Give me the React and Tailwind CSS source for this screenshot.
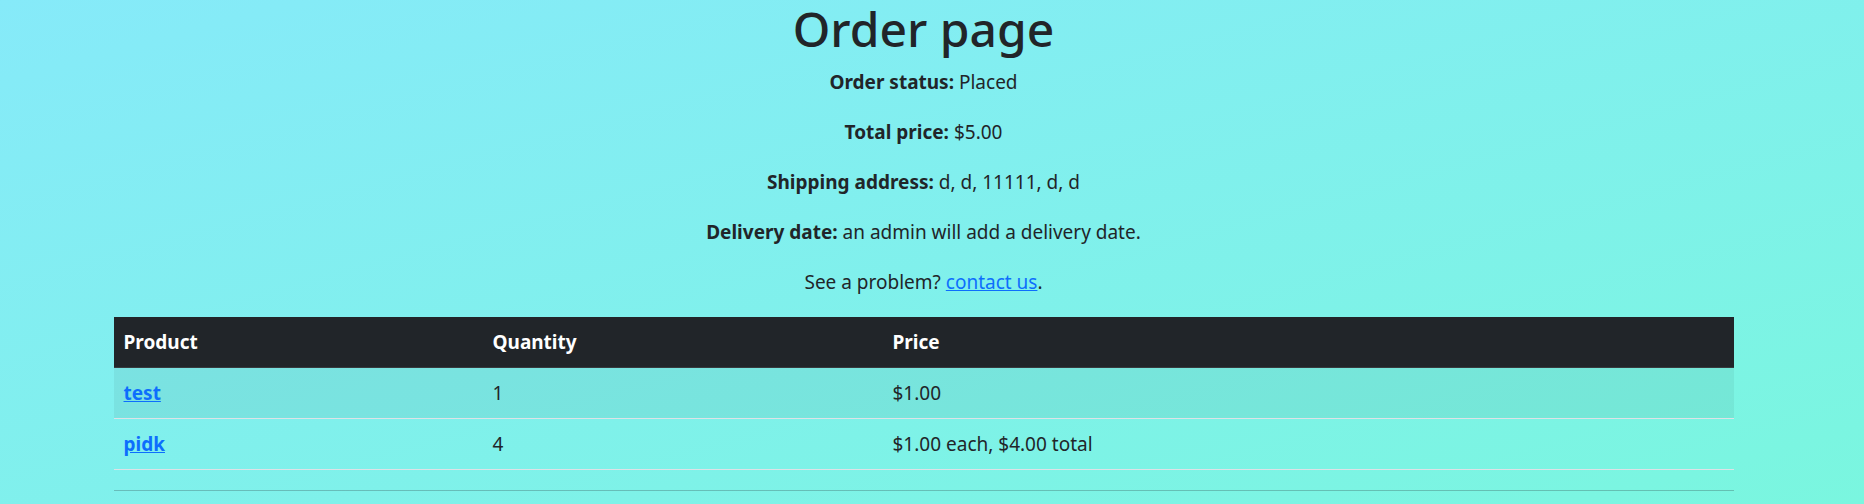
import React from 'react';

const items = [
  { name: 'test', qty: 1, price: '$1.00' },
  { name: 'pidk', qty: 4, price: '$1.00 each, $4.00 total' },
];

const details = [
  ['Order status:', 'Placed'],
  ['Total price:', '$5.00'],
  ['Shipping address:', 'd, d, 11111, d, d'],
  ['Delivery date:', 'an admin will add a delivery date.'],
];

const App = () => {
  return (
    <div className="min-h-screen w-full bg-linear-to-br from-[#86eaf9] to-[#7af6df] text-[#212529] font-['Noto_Sans',sans-serif] text-[19px] leading-[30px]">
      <div className="flex justify-center pr-[17px]">
        <div className="w-[1620px]">
          <h1 className="mb-[10px] text-center text-[48px] leading-[57px] font-medium">Order page</h1>

          {details.map(([label, value]) => (
            <p key={label} className="mb-[20px] text-center">
              <span className="font-bold">{label}</span> {value}
            </p>
          ))}

          <p className="mb-[20px] text-center">
            See a problem?{' '}
            <a href="#" className="text-[#0d6efd] underline">contact us</a>.
          </p>

          <table className="w-full border-collapse text-left">
            <thead>
              <tr className="bg-[#212529] text-white">
                <th className="w-[369px] px-[10px] py-[10px] font-bold border-b border-[#373b3e]">Product</th>
                <th className="w-[400px] px-[10px] py-[10px] font-bold border-b border-[#373b3e]">Quantity</th>
                <th className="px-[10px] py-[10px] font-bold border-b border-[#373b3e]">Price</th>
              </tr>
            </thead>
            <tbody>
              {items.map((item, index) => (
                <tr
                  key={item.name}
                  className={`border-b border-[#dee2e6] ${index % 2 === 0 ? 'bg-black/5' : ''}`}
                >
                  <td className="px-[10px] py-[10px]">
                    <a href="#" className="font-bold text-[#0d6efd] underline">{item.name}</a>
                  </td>
                  <td className="px-[10px] py-[10px]">{item.qty}</td>
                  <td className="px-[10px] py-[10px]">{item.price}</td>
                </tr>
              ))}
            </tbody>
          </table>

          <hr className="mt-[20px] border-t border-[#212529] opacity-25" />
        </div>
      </div>
    </div>
  );
};

export default App;
